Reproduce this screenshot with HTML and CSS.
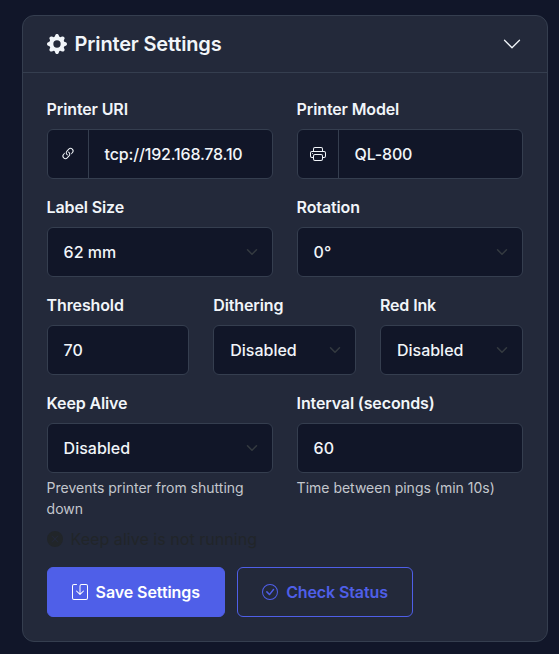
FILE: index.html
```html
<!DOCTYPE html>
<html lang="en">
<head>
<meta charset="utf-8">
<title>Printer Settings</title>
<link rel="stylesheet" href="styles.css">
</head>
<body>
<svg class="sprite" aria-hidden="true">
  <symbol id="chevron" viewBox="0 0 16 16"><path d="M1.646 4.646a.5.5 0 0 1 .708 0L8 10.293l5.646-5.647a.5.5 0 0 1 .708.708l-6 6a.5.5 0 0 1-.708 0l-6-6a.5.5 0 0 1 0-.708z"/></symbol>
  <symbol id="caret" viewBox="0 0 16 16"><path fill="none" stroke="currentColor" stroke-linecap="round" stroke-linejoin="round" stroke-width="2" d="m2 5 6 6 6-6"/></symbol>
</svg>
<section class="card">
  <header class="card-header">
    <svg class="icon gear" viewBox="0 0 16 16"><path d="M9.405 1.05c-.413-1.4-2.397-1.4-2.81 0l-.1.34a1.464 1.464 0 0 1-2.105.872l-.31-.17c-1.283-.698-2.686.705-1.987 1.987l.169.311c.446.82.023 1.841-.872 2.105l-.34.1c-1.4.413-1.4 2.397 0 2.81l.34.1a1.464 1.464 0 0 1 .872 2.105l-.17.31c-.698 1.283.705 2.686 1.987 1.987l.311-.169a1.464 1.464 0 0 1 2.105.872l.1.34c.413 1.4 2.397 1.4 2.81 0l.1-.34a1.464 1.464 0 0 1 2.105-.872l.31.17c1.283.698 2.686-.705 1.987-1.987l-.169-.311a1.464 1.464 0 0 1 .872-2.105l.34-.1c1.4-.413 1.4-2.397 0-2.81l-.34-.1a1.464 1.464 0 0 1-.872-2.105l.17-.31c.698-1.283-.705-2.686-1.987-1.987l-.311.169a1.464 1.464 0 0 1-2.105-.872zM8 10.93a2.929 2.929 0 1 1 0-5.86 2.929 2.929 0 0 1 0 5.858z"/></svg>
    <h5 class="title">Printer Settings</h5>
    <svg class="icon toggle"><use href="#chevron"/></svg>
  </header>
  <div class="card-body">
    <div class="row halves">
      <div class="field">
        <div class="label">Printer URI</div>
        <div class="control group">
          <span class="addon"><svg class="icon addon-link" viewBox="0 0 16 16"><path d="M4.715 6.542 3.343 7.914a3 3 0 1 0 4.243 4.243l1.828-1.829A3 3 0 0 0 8.586 5.5L8 6.086a1 1 0 0 0-.154.199 2 2 0 0 1 .861 3.337L6.88 11.45a2 2 0 1 1-2.83-2.83l.793-.792a4 4 0 0 1-.128-1.287z"/><path d="M6.586 4.672A3 3 0 0 0 7.414 9.5l.775-.776a2 2 0 0 1-.896-3.346L9.12 3.55a2 2 0 1 1 2.83 2.83l-.793.792c.112.42.155.855.128 1.287l1.372-1.372a3 3 0 1 0-4.243-4.243z"/></svg></span>
          <span class="value">tcp://192.168.78.10</span>
        </div>
      </div>
      <div class="field">
        <div class="label">Printer Model</div>
        <div class="control group">
          <span class="addon"><svg class="icon" viewBox="0 0 16 16"><path d="M2.5 8a.5.5 0 1 0 0-1 .5.5 0 0 0 0 1"/><path d="M5 1a2 2 0 0 0-2 2v2H2a2 2 0 0 0-2 2v3a2 2 0 0 0 2 2h1v1a2 2 0 0 0 2 2h6a2 2 0 0 0 2-2v-1h1a2 2 0 0 0 2-2V7a2 2 0 0 0-2-2h-1V3a2 2 0 0 0-2-2zM4 3a1 1 0 0 1 1-1h6a1 1 0 0 1 1 1v2H4zm1 5a2 2 0 0 0-2 2v1H2a1 1 0 0 1-1-1V7a1 1 0 0 1 1-1h12a1 1 0 0 1 1 1v3a1 1 0 0 1-1 1h-1v-1a2 2 0 0 0-2-2zm7 2v3a1 1 0 0 1-1 1H5a1 1 0 0 1-1-1v-3a1 1 0 0 1 1-1h6a1 1 0 0 1 1 1"/></svg></span>
          <span class="value">QL-800</span>
        </div>
      </div>
    </div>
    <div class="row halves">
      <div class="field">
        <div class="label">Label Size</div>
        <div class="control"><span class="value">62 mm</span><svg class="caret"><use href="#caret"/></svg></div>
      </div>
      <div class="field">
        <div class="label">Rotation</div>
        <div class="control"><span class="value">0°</span><svg class="caret"><use href="#caret"/></svg></div>
      </div>
    </div>
    <div class="row thirds">
      <div class="field">
        <div class="label">Threshold</div>
        <div class="control"><span class="value">70</span></div>
      </div>
      <div class="field">
        <div class="label">Dithering</div>
        <div class="control"><span class="value">Disabled</span><svg class="caret"><use href="#caret"/></svg></div>
      </div>
      <div class="field">
        <div class="label">Red Ink</div>
        <div class="control"><span class="value">Disabled</span><svg class="caret"><use href="#caret"/></svg></div>
      </div>
    </div>
    <div class="row halves last">
      <div class="field">
        <div class="label">Keep Alive</div>
        <div class="control"><span class="value">Disabled</span><svg class="caret"><use href="#caret"/></svg></div>
        <div class="help">Prevents printer from shutting down</div>
      </div>
      <div class="field">
        <div class="label">Interval (seconds)</div>
        <div class="control"><span class="value">60</span></div>
        <div class="help">Time between pings (min 10s)</div>
      </div>
    </div>
    <div class="status">
      <svg class="icon" viewBox="0 0 16 16"><path d="M16 8A8 8 0 1 1 0 8a8 8 0 0 1 16 0M5.354 4.646a.5.5 0 1 0-.708.708L7.293 8l-2.647 2.646a.5.5 0 0 0 .708.708L8 8.707l2.646 2.647a.5.5 0 0 0 .708-.708L8.707 8l2.647-2.646a.5.5 0 0 0-.708-.708L8 7.293z"/></svg>
      <span>Keep alive is not running</span>
    </div>
    <div class="actions">
      <button class="btn primary" type="button"><svg class="icon" viewBox="0 0 16 16"><path d="M2 1a1 1 0 0 0-1 1v12a1 1 0 0 0 1 1h12a1 1 0 0 0 1-1V2a1 1 0 0 0-1-1H9.5a1 1 0 0 0-1 1v7.293l2.646-2.647a.5.5 0 0 1 .708.708l-3.5 3.5a.5.5 0 0 1-.708 0l-3.5-3.5a.5.5 0 1 1 .708-.708L7.5 9.293V2a2 2 0 0 1 2-2H14a2 2 0 0 1 2 2v12a2 2 0 0 1-2 2H2a2 2 0 0 1-2-2V2a2 2 0 0 1 2-2h2.5a.5.5 0 0 1 0 1z"/></svg><span>Save Settings</span></button>
      <button class="btn outline" type="button"><svg class="icon" viewBox="0 0 16 16"><path d="M8 15A7 7 0 1 1 8 1a7 7 0 0 1 0 14m0 1A8 8 0 1 0 8 0a8 8 0 0 0 0 16"/><path d="M10.97 4.97a.235.235 0 0 0-.02.022L7.477 9.417 5.384 7.323a.75.75 0 0 0-1.06 1.06L6.97 11.03a.75.75 0 0 0 1.079-.02l3.992-4.99a.75.75 0 0 0-1.071-1.05z"/></svg><span>Check Status</span></button>
    </div>
  </div>
</section>
</body>
</html>
```
FILE: styles.css
```css
* { box-sizing: border-box; }

body {
  margin: 0;
  padding: 15px 11.4px 12px 21.6px;
  background: #111629;
  color: #f1f5f9;
  font: 500 16px/24px Inter, "Liberation Sans", sans-serif;
}

.sprite { display: none; }

.icon {
  width: 16px;
  height: 16px;
  flex: none;
  display: block;
  fill: currentColor;
}

.card {
  background: #23293a;
  border: 1px solid #353e4f;
  border-radius: 12px;
}

.card-header {
  display: flex;
  align-items: center;
  height: 57px;
  padding: 0 24.6px 0 24px;
  border-bottom: 1px solid #353e4f;
}

.gear { width: 20px; height: 20px; }

.title {
  flex: 1;
  margin: 0 0 0 8px;
  font-size: 20px;
  font-weight: 600;
  letter-spacing: -0.16px;
}

.toggle { width: 20px; height: 20px; }

.card-body { padding: 24px; }

.row {
  display: grid;
  column-gap: 24px;
  margin-bottom: 16px;
}

.halves { grid-template-columns: repeat(2, minmax(0, 1fr)); }
.thirds { grid-template-columns: repeat(3, minmax(0, 1fr)); }
.last { margin-bottom: 8px; }

.label {
  margin-bottom: 8px;
  font-weight: 600;
  letter-spacing: -0.13px;
}

.control {
  display: flex;
  align-items: center;
  justify-content: space-between;
  height: 50px;
  padding: 0 14px 0 16px;
  background: #111628;
  border: 1px solid #353e4f;
  border-radius: 6px;
}

.group {
  justify-content: flex-start;
  gap: 16px;
  padding-left: 0;
  letter-spacing: -0.17px;
}

.addon {
  display: flex;
  align-items: center;
  justify-content: center;
  width: 41px;
  height: 100%;
  border-right: 1px solid #353e4f;
}

.caret {
  width: 12px;
  height: 12px;
  color: #343a40;
}

.help {
  margin-top: 4px;
  font-size: 14px;
  font-weight: 400;
  line-height: 21px;
  color: #c3c7cd;
}

.status {
  display: flex;
  align-items: center;
  gap: 8px;
  margin-bottom: 16px;
  color: #212529;
  font-weight: 400;
  letter-spacing: 0.04px;
}

.actions { display: flex; gap: 12px; }

.btn {
  display: flex;
  align-items: center;
  justify-content: flex-start;
  gap: 8px;
  height: 50px;
  padding: 0 0 0 24px;
  border: 1px solid #4f5fe8;
  border-radius: 6px;
  font: inherit;
  white-space: nowrap;
}

.primary {
  width: 178px;
  background: #4f5fe8;
  color: #fff;
  font-weight: 600;
  letter-spacing: -0.08px;
}

.outline {
  width: 176px;
  padding-left: 24.6px;
  background: transparent;
  color: #4f5fe8;
  font-weight: 600;
  letter-spacing: -0.12px;
}
```
